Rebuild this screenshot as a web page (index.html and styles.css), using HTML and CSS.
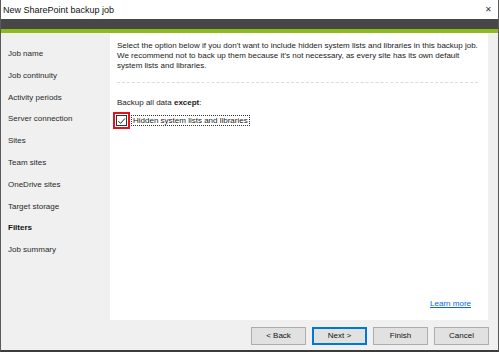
FILE: index.html
```html
<!DOCTYPE html>
<html lang="en">
<head>
  <meta charset="UTF-8" />
  <title>New SharePoint backup job</title>
  <link rel="stylesheet" href="styles.css">
</head>
<body>

  <div class="window">
    <div class="titlebar">
      <span class="title">New SharePoint backup job</span>
      <span class="close">&#x2715;</span>
    </div>
    <div class="dark-bar"></div>
    <div class="green-bar"></div>

    <div class="content">
      <ul class="nav">
        <li>Job name</li>
        <li>Job continuity</li>
        <li>Activity periods</li>
        <li>Server connection</li>
        <li>Sites</li>
        <li>Team sites</li>
        <li>OneDrive sites</li>
        <li>Target storage</li>
        <li class="active">Filters</li>
        <li>Job summary</li>
      </ul>

      <div class="panel">
        <p class="intro">
          Select the option below if you don't want to include hidden system lists and libraries in this backup job.<br>
          We recommend not to back up them because it's not necessary, as every site has its own default<br>
          system lists and libraries.
        </p>
        <div class="separator"></div>
        <div class="except">Backup all data <b>except</b>:</div>
        <label class="option">
          <span class="check-wrap">
            <span class="checkbox">
              <svg width="10" height="10" viewBox="0 0 10 10"><path d="M1.5 5.2 L4 7.7 L8.8 2.2" fill="none" stroke="#222" stroke-width="1.1"/></svg>
            </span>
          </span>
          <span class="option-label">Hidden system lists and libraries</span>
        </label>
        <div class="spacer"></div>
        <a href="#" class="learn-more">Learn more</a>
      </div>
      <div class="gutter"></div>
    </div>

    <div class="footer">
      <button class="btn">&lt; Back</button>
      <button class="btn primary">Next &gt;</button>
      <button class="btn">Finish</button>
      <button class="btn">Cancel</button>
    </div>
  </div>

</body>
</html>
```

FILE: styles.css
```css
body {
  margin: 0;
  font-family: "Liberation Sans", Arial, sans-serif;
  font-size: 8px;
  color: #1a1a1a;
  background: #f0f0f0;
}

.window {
  width: 499px;
  height: 352px;
  box-sizing: border-box;
  border: 1px solid #5a5a5a;
  border-top: none;
  border-bottom: 2px solid #3c3c3c;
  display: flex;
  flex-direction: column;
  background: #f0f0f0;
}

.titlebar {
  height: 19px;
  background: white;
  display: flex;
  align-items: center;
  justify-content: space-between;
  padding: 0 6px 0 2px;
}

.title {
  font-size: 9px;
  color: #111;
}

.close {
  font-size: 8px;
  color: #333;
}

.dark-bar {
  height: 10px;
  background: #474747;
}

.green-bar {
  height: 4px;
  background: #8cbd1c;
}

.content {
  flex: 1;
  display: flex;
}

.nav {
  list-style: none;
  margin: 0;
  padding: 10px 0 0 0;
  width: 109px;
}

.nav li {
  height: 21.8px;
  line-height: 21.8px;
  padding-left: 7px;
  color: #2a2a2a;
}

.nav li.active {
  font-weight: bold;
  color: #111;
}

.panel {
  width: 378px;
  background: white;
  padding: 8px 7px 12px 7px;
  box-sizing: border-box;
  display: flex;
  flex-direction: column;
}

.intro {
  margin: 0;
  line-height: 10px;
  white-space: nowrap;
}

.separator {
  border-top: 1px dashed #dcdcdc;
  margin: 11px 3px 0 0;
}

.except {
  margin-top: 15px;
}

.option {
  display: flex;
  align-items: center;
  margin-top: 5px;
}

.check-wrap {
  width: 13px;
  height: 13px;
  border: 2px solid #e0141e;
  margin-left: -4px;
  display: flex;
  align-items: center;
  justify-content: center;
}

.checkbox {
  width: 9px;
  height: 9px;
  border: 1px solid #333;
  background: white;
  display: flex;
  align-items: center;
  justify-content: center;
}

.option-label {
  margin-left: 1px;
  padding: 0 1px;
  border: 1px dotted #333;
  line-height: 9px;
}

.spacer {
  flex: 1;
}

.learn-more {
  align-self: flex-end;
  color: #0a64e0;
  margin-right: 10px;
}

.gutter {
  flex: 1;
}

.footer {
  height: 30px;
  display: flex;
  justify-content: flex-end;
  align-items: center;
  gap: 6px;
  padding-right: 9px;
  padding-top: 1px;
  box-sizing: border-box;
}

.btn {
  width: 55px;
  height: 18px;
  font-family: "Liberation Sans", Arial, sans-serif;
  font-size: 8px;
  color: #111;
  background: #e1e1e1;
  border: 1px solid #adadad;
  padding: 0;
}

.btn.primary {
  border: 1px solid #0078d7;
  box-shadow: inset 0 0 0 1px #0078d7;
}
```
